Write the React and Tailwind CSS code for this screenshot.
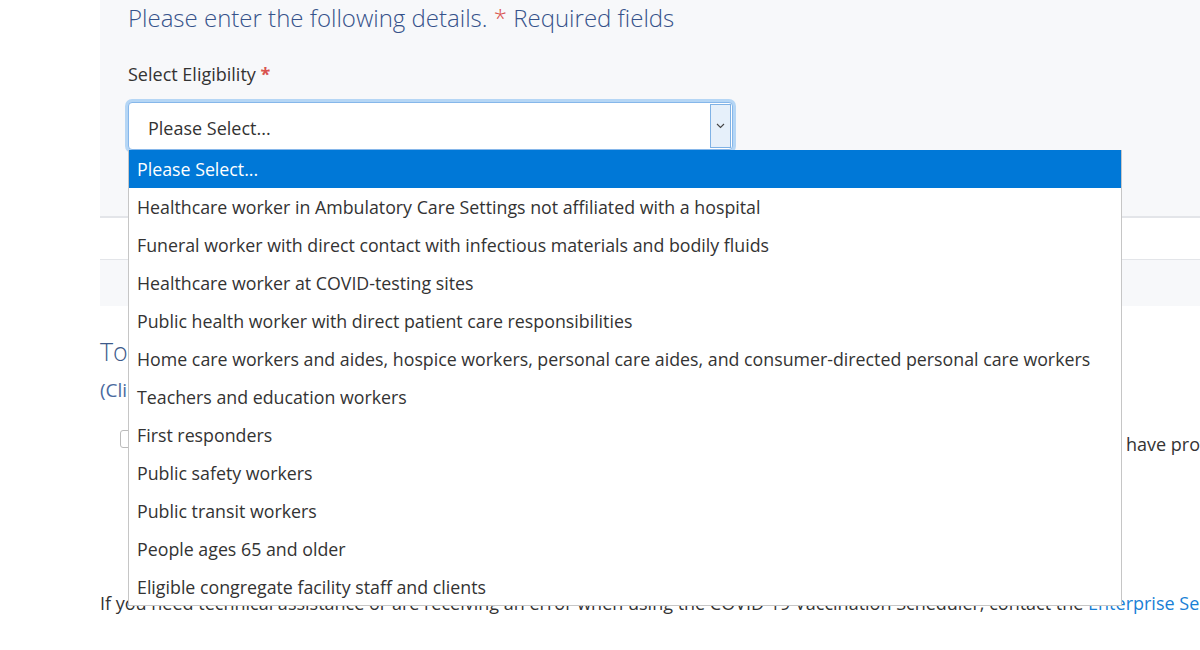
import React from 'react';

const options = [
  'Please Select...',
  'Healthcare worker in Ambulatory Care Settings not affiliated with a hospital',
  'Funeral worker with direct contact with infectious materials and bodily fluids',
  'Healthcare worker at COVID-testing sites',
  'Public health worker with direct patient care responsibilities',
  'Home care workers and aides, hospice workers, personal care aides, and consumer-directed personal care workers',
  'Teachers and education workers',
  'First responders',
  'Public safety workers',
  'Public transit workers',
  'People ages 65 and older',
  'Eligible congregate facility staff and clients',
];

const font = { fontFamily: '"Open Sans", "Noto Sans", sans-serif' };

export default function App() {
  return (
    <div className="relative w-[1200px] h-[650px] overflow-hidden bg-white text-[#333]" style={font}>
      {/* form card */}
      <div className="ml-[100px] h-[306px] bg-[#f7f8fa] flex flex-col">
        <div className="pl-[28px] pt-[2px]">
          <h2 className="text-[24px] font-light leading-[32px] text-[#36528a]">
            Please enter the following details. <span className="text-[#d9534f]">*</span> Required fields
          </h2>
          <div className="mt-[28px] text-[18px] leading-[24px] text-[#333]">
            Select Eligibility <span className="text-[#d9534f] font-bold">*</span>
          </div>
          <div className="mt-[16px] w-[605px] h-[48px] rounded-[4px] ring-[3px] ring-[#b5d6f5] border border-[#86b7ea] bg-white flex items-center justify-between">
            <span className="pl-[19px] pt-[4px] text-[18px] text-[#333]">Please Select...</span>
            <span className="mr-[1px] h-[44px] w-[21px] bg-[#e6f0fa] border border-[#7fb2e5] flex items-center justify-center">
              <svg width="9" height="6" viewBox="0 0 9 6" fill="none" stroke="#444" strokeWidth="1.1">
                <path d="M1 1l3.5 3.5L8 1" />
              </svg>
            </span>
          </div>
        </div>
        <div className="mt-[66px] h-[44px] bg-white border-t-2 border-b border-[#e3e5e9]" />
      </div>

      {/* content below card */}
      <div className="ml-[100px] mt-[28px] text-[25px] font-light leading-[34px] text-[#3d5a8a]">To schedule your vaccination appointment</div>
      <div className="ml-[100px] mt-[9px] text-[19px] leading-[26px] text-[#4a6aa0]">(Click the checkbox below to continue)</div>
      <div className="ml-[120px] mt-[18px] flex items-center gap-[8px] whitespace-nowrap text-[18px] leading-[26px]">
        <span className="w-[16px] h-[18px] rounded-[3px] border border-[#bbb] bg-white shrink-0" />
        <span className="pl-[982px] pt-[10px]">have provided accurate information</span>
      </div>
      <div className="ml-[100px] mt-[134px] whitespace-nowrap text-[18px] leading-[24px] text-[#333]">
        If you need technical assistance or are receiving an error when using the COVID-19 Vaccination Scheduler, contact the{' '}
        <span className="text-[#1a7fd6]">Enterprise Service Desk</span>
      </div>

      {/* open dropdown list */}
      <div className="absolute left-[128px] top-[150px] w-[994px] h-[456px] overflow-hidden bg-white border border-[#c6c6c6] border-t-0">
        {options.map((o, i) => (
          <div
            key={i}
            className={`h-[38px] pl-[8px] flex items-center whitespace-nowrap text-[17.8px] ${i === 0 ? 'bg-[#0078d7] text-white' : 'text-[#333]'}`}
          >
            {o}
          </div>
        ))}
      </div>
    </div>
  );
}
